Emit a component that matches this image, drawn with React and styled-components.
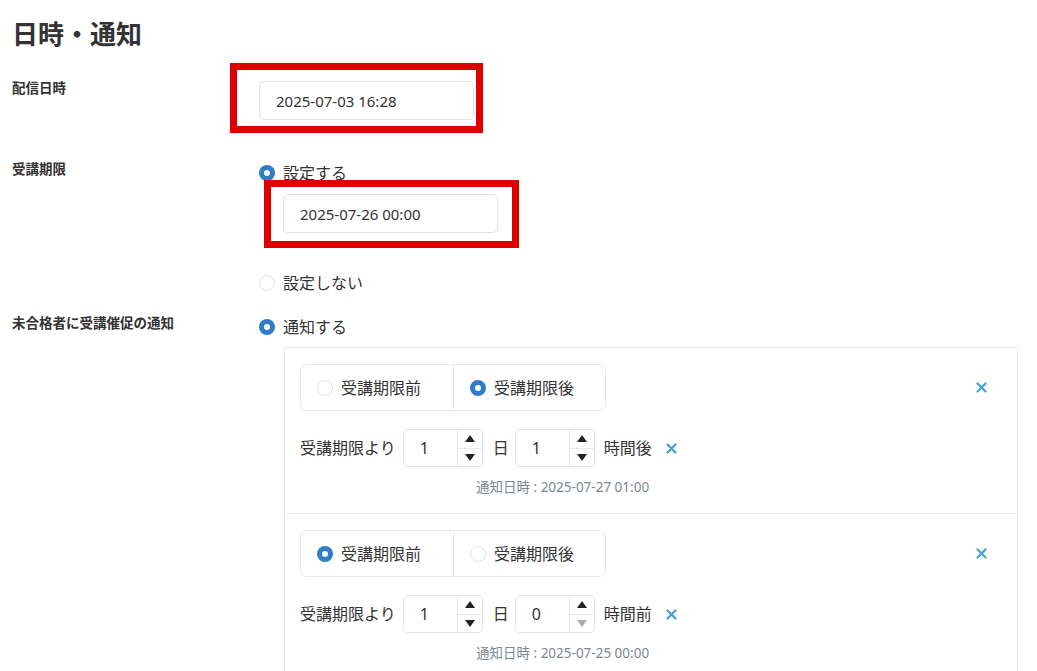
import React, { useState } from "react";
import styled, { createGlobalStyle } from "styled-components";

const GlobalStyle = createGlobalStyle`
  body {
    margin: 0;
    background: #fff;
    color: #333;
    font-family: "Noto Sans", "Noto Sans CJK JP", sans-serif;
  }
  * { box-sizing: border-box; }
`;

const Page = styled.div`
  padding: 16px 19px 40px 12px;
`;

const Title = styled.h2`
  margin: 0;
  font-size: 26px;
  line-height: 36px;
  font-weight: 700;
  color: #333;
`;

const Form = styled.div`
  margin-top: 29px;
`;

const Row = styled.div`
  display: grid;
  grid-template-columns: 247px 1fr;
  margin-bottom: ${(p) => p.gap || 0}px;
`;

const Label = styled.div`
  font-size: 13.5px;
  line-height: 14px;
  font-weight: 700;
  color: #333;
`;

const Field = styled.div`
  display: flex;
  flex-direction: column;
  align-items: flex-start;
`;

const RadioLabel = styled.label`
  display: flex;
  align-items: center;
  gap: 8px;
  font-size: 16px;
  line-height: 22px;
  color: #333;
  cursor: pointer;
  margin-top: ${(p) => p.top || 0}px;
`;

const Dot = styled.span`
  width: 16px;
  height: 16px;
  border-radius: 50%;
  flex-shrink: 0;
  background: ${(p) => (p.checked ? "#2f7cc7" : "#fff")};
  border: ${(p) => (p.checked ? "none" : "1.5px solid #dde2e7")};
  display: flex;
  align-items: center;
  justify-content: center;
  &::after {
    content: "";
    width: 6px;
    height: 6px;
    border-radius: 50%;
    background: #fff;
    display: ${(p) => (p.checked ? "block" : "none")};
  }
`;

const Highlight = styled.div`
  position: relative;
  margin-left: ${(p) => p.indent || 0}px;
  margin-top: ${(p) => p.top || 0}px;
`;

const RedFrame = styled.span`
  position: absolute;
  top: -${(p) => p.t}px;
  left: -${(p) => p.l}px;
  right: -${(p) => p.r}px;
  bottom: -${(p) => p.b}px;
  border: 7px solid #dd0000;
  pointer-events: none;
`;

const DateInput = styled.input`
  display: block;
  width: 215px;
  height: 39px;
  border: 1px solid #dfe3e7;
  border-radius: 5px;
  padding: 0 16px;
  font-family: inherit;
  font-size: 15px;
  color: #333;
  background: #fff;
  outline: none;
`;

const Panel = styled.div`
  align-self: stretch;
  margin: 9px 0 0 25px;
  border: 1px solid #e8ebee;
  background: #fff;
`;

const Item = styled.div`
  padding: 16px 0 16px 15px;
  & + & {
    border-top: 1px solid #e8ebee;
  }
`;

const ItemHead = styled.div`
  display: flex;
  align-items: center;
  justify-content: space-between;
  padding-right: 26px;
`;

const Segment = styled.div`
  display: flex;
  height: 47px;
  border: 1px solid #e6e9ed;
  border-radius: 7px;
`;

const SegmentCell = styled.div`
  width: 152px;
  display: flex;
  align-items: center;
  padding-left: 16px;
  border-left: ${(p) => (p.first ? "none" : "1px solid #e6e9ed")};
`;

const CloseButton = styled.button`
  width: 20px;
  height: 20px;
  padding: 0;
  border: none;
  background: none;
  display: flex;
  align-items: center;
  justify-content: center;
  cursor: pointer;
  margin-left: ${(p) => p.left || 0}px;
`;

const OffsetRow = styled.div`
  display: flex;
  align-items: center;
  margin-top: 18px;
  font-size: 16px;
  line-height: 22px;
  color: #333;
`;

const Unit = styled.span`
  margin-left: ${(p) => p.left || 0}px;
`;

const NumberBox = styled.div`
  display: flex;
  width: 80px;
  height: 38px;
  border: 1px solid #e1e5e9;
  border-radius: 5px;
  margin-left: ${(p) => p.left || 0}px;
  overflow: hidden;
`;

const NumberValue = styled.div`
  flex: 1;
  display: flex;
  align-items: center;
  padding-left: 16px;
  font-size: 16px;
  color: #333;
`;

const Spinner = styled.div`
  width: 25px;
  display: flex;
  flex-direction: column;
  border-left: 1px solid #e6e9ec;
`;

const SpinButton = styled.div`
  flex: 1;
  display: flex;
  align-items: center;
  justify-content: center;
  & + & {
    border-top: 1px solid #e6e9ec;
  }
`;

const Note = styled.div`
  margin: 10px 0 0 176px;
  font-size: 13.5px;
  line-height: 20px;
  color: #7b8794;
`;

const Cross = () => (
  <svg width="11" height="11" viewBox="0 0 11 11">
    <path d="M1.5 1.5 L9.5 9.5 M9.5 1.5 L1.5 9.5" stroke="#3ea2d6" strokeWidth="2.2" strokeLinecap="round" />
  </svg>
);

const Triangle = ({ down, disabled }) => (
  <svg width="10" height="7" viewBox="0 0 10 7">
    <polygon
      points={down ? "0,0 10,0 5,7" : "0,7 10,7 5,0"}
      fill={disabled ? "#a9a9a9" : "#1f2328"}
    />
  </svg>
);

const Radio = ({ checked, children, top, onClick }) => (
  <RadioLabel top={top} onClick={onClick}>
    <Dot checked={checked} />
    {children}
  </RadioLabel>
);

const NumberField = ({ value, left }) => (
  <NumberBox left={left}>
    <NumberValue>{value}</NumberValue>
    <Spinner>
      <SpinButton>
        <Triangle />
      </SpinButton>
      <SpinButton>
        <Triangle down disabled={value === 0} />
      </SpinButton>
    </Spinner>
  </NumberBox>
);

const notices = [
  { id: 1, timing: "after", days: 1, hours: 1, date: "2025-07-27 01:00" },
  { id: 2, timing: "before", days: 1, hours: 0, date: "2025-07-25 00:00" },
];

const NoticeItem = ({ item }) => (
  <Item>
    <ItemHead>
      <Segment>
        <SegmentCell first>
          <Radio checked={item.timing === "before"}>受講期限前</Radio>
        </SegmentCell>
        <SegmentCell>
          <Radio checked={item.timing === "after"}>受講期限後</Radio>
        </SegmentCell>
      </Segment>
      <CloseButton>
        <Cross />
      </CloseButton>
    </ItemHead>
    <OffsetRow>
      <span>受講期限より</span>
      <NumberField value={item.days} left={7} />
      <Unit left={10}>日</Unit>
      <NumberField value={item.hours} left={6} />
      <Unit left={9}>{item.timing === "after" ? "時間後" : "時間前"}</Unit>
      <CloseButton left={10}>
        <Cross />
      </CloseButton>
    </OffsetRow>
    <Note>通知日時 : {item.date}</Note>
  </Item>
);

export default function App() {
  const [deadline, setDeadline] = useState(true);
  const [notify] = useState(true);

  return (
    <Page>
      <GlobalStyle />
      <Title>日時・通知</Title>
      <Form>
        <Row gap={42}>
          <Label>配信日時</Label>
          <Field>
            <Highlight>
              <DateInput defaultValue="2025-07-03 16:28" />
              <RedFrame t={18} l={29} r={9} b={13} />
            </Highlight>
          </Field>
        </Row>
        <Row gap={22}>
          <Label>受講期限</Label>
          <Field>
            <Radio checked={deadline} onClick={() => setDeadline(true)}>
              設定する
            </Radio>
            <Highlight indent={24} top={10}>
              <DateInput defaultValue="2025-07-26 00:00" />
              <RedFrame t={14} l={19} r={21} b={15} />
            </Highlight>
            <Radio checked={!deadline} top={39} onClick={() => setDeadline(false)}>
              設定しない
            </Radio>
          </Field>
        </Row>
        <Row>
          <Label>未合格者に受講催促の通知</Label>
          <Field>
            <Radio checked={notify}>通知する</Radio>
            <Panel>
              {notices.map((n) => (
                <NoticeItem item={n} key={n.id} />
              ))}
            </Panel>
          </Field>
        </Row>
      </Form>
    </Page>
  );
}
